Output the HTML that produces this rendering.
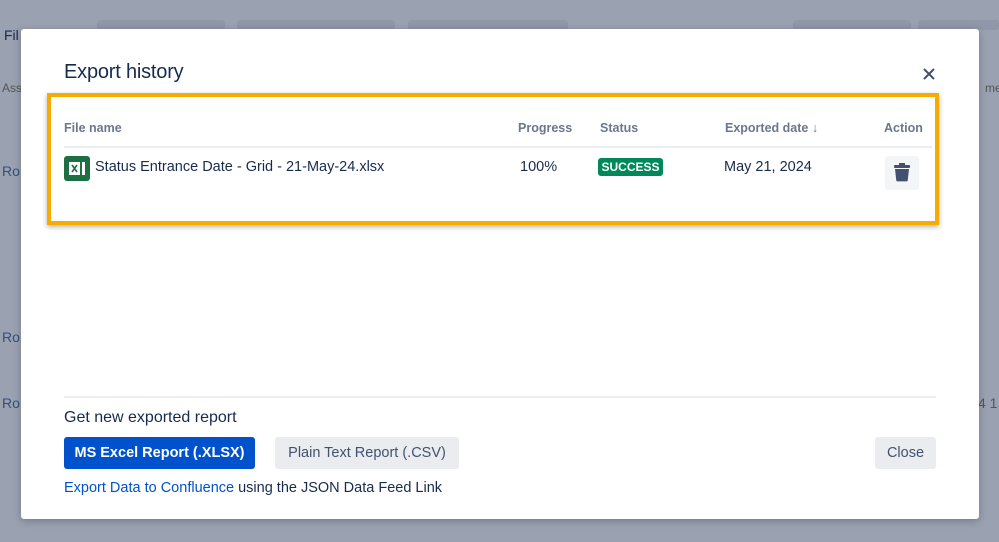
<!DOCTYPE html>
<html><head><style>
body{margin:0;width:999px;height:542px;overflow:hidden;background:#9aa1b1;font-family:"Liberation Sans",sans-serif;position:relative}
.bg{position:absolute;color:#33507a;font-size:14px}
.modal{position:absolute;left:21px;top:29px;width:958px;height:490px;background:#fff;border-radius:3px;box-shadow:0 2px 8px rgba(0,0,0,.25)}
.a{position:absolute}
h1{position:absolute;left:43px;top:32px;margin:0;font-size:20px;font-weight:normal;color:#172b4d;letter-spacing:-.2px}
.th{position:absolute;top:92px;font-size:12.5px;font-weight:bold;color:#6b778c}
.td{position:absolute;top:130px;font-size:14.5px;color:#172b4d}
.btn{position:absolute;top:408px;height:32px;line-height:32px;border-radius:3px;font-size:14.5px;text-align:center}
</style></head><body>
<div class="bg" style="left:4px;top:27px;color:#172b4d">Fil</div>
<div class="bg" style="left:2px;top:81px;font-size:12px;color:#555">Ass</div>
<div class="bg" style="left:2px;top:163px">Ro</div>
<div class="bg" style="left:2px;top:329px">Ro</div>
<div class="bg" style="left:2px;top:395px">Ro</div>
<div class="bg" style="left:985px;top:81px;font-size:12px;color:#555">me</div>
<div class="bg" style="left:978px;top:395px;color:#555">4 1</div>
<div class="a" style="left:97px;top:20px;width:128px;height:10px;background:#8f97a8;border-radius:3px"></div>
<div class="a" style="left:237px;top:20px;width:158px;height:10px;background:#8f97a8;border-radius:3px"></div>
<div class="a" style="left:408px;top:20px;width:160px;height:10px;background:#8f97a8;border-radius:3px"></div>
<div class="a" style="left:793px;top:20px;width:118px;height:10px;background:#8f97a8;border-radius:3px"></div>
<div class="a" style="left:918px;top:20px;width:81px;height:10px;background:#8f97a8;border-radius:3px"></div>
<div class="modal">
<h1>Export history</h1>
<svg class="a" style="left:901px;top:38px" width="14" height="14"><path d="M2 2L12 12M12 2L2 12" stroke="#42526e" stroke-width="2"/></svg>
<div class="a" style="left:26px;top:64px;width:884px;height:124px;border:4px solid #f6ab00;box-shadow:0 2px 5px rgba(0,0,0,.3)"></div>
<div class="th" style="left:43px">File name</div>
<div class="th" style="left:497px">Progress</div>
<div class="th" style="left:579px">Status</div>
<div class="th" style="left:704px">Exported date ↓</div>
<div class="th" style="left:863px">Action</div>
<div class="a" style="left:43px;top:117px;width:868px;height:2px;background:#ebecf0"></div>
<svg class="a" style="left:43px;top:127px" width="26" height="25"><rect width="26" height="25" rx="3" fill="#1d7044"/><rect x="5" y="6" width="11" height="13" fill="#fff"/><path d="M8 9l5 7M13 9l-5 7" stroke="#1d7044" stroke-width="1.6"/><rect x="18" y="6" width="3" height="13" fill="#fff"/></svg>
<div class="td" style="left:74px">Status Entrance Date - Grid - 21-May-24.xlsx</div>
<div class="td" style="left:499px">100%</div>
<div class="a" style="left:577px;top:129px;width:65px;height:18px;background:#00875a;border-radius:3px;color:#fff;font-size:12px;font-weight:bold;line-height:18px;text-align:center">SUCCESS</div>
<div class="td" style="left:703px">May 21, 2024</div>
<div class="a" style="left:864px;top:127px;width:34px;height:34px;background:#f4f5f7;border-radius:3px">
<svg width="34" height="34"><rect x="9" y="9" width="16" height="3" rx="1" fill="#42526e"/><rect x="14" y="7" width="6" height="3" fill="#42526e"/><path d="M10 13h14l-1.3 11.5a1 1 0 0 1-1 .9h-9.4a1 1 0 0 1-1-.9z" fill="#42526e"/></svg></div>
<div class="a" style="left:43px;top:367px;width:872px;height:2px;background:#ebecf0"></div>
<div class="a" style="left:43px;top:380px;font-size:16px;color:#172b4d">Get new exported report</div>
<div class="btn" style="left:43px;width:191px;background:#0052cc;color:#fff;font-weight:bold">MS Excel Report (.XLSX)</div>
<div class="btn" style="left:254px;width:184px;background:#ebecf0;color:#42526e">Plain Text Report (.CSV)</div>
<div class="btn" style="left:854px;width:61px;background:#ebecf0;color:#42526e">Close</div>
<div class="a" style="left:43px;top:451px;font-size:14.5px;color:#172b4d"><span style="color:#0052cc">Export Data to Confluence</span> using the JSON Data Feed Link</div>
</div>
</body></html>
